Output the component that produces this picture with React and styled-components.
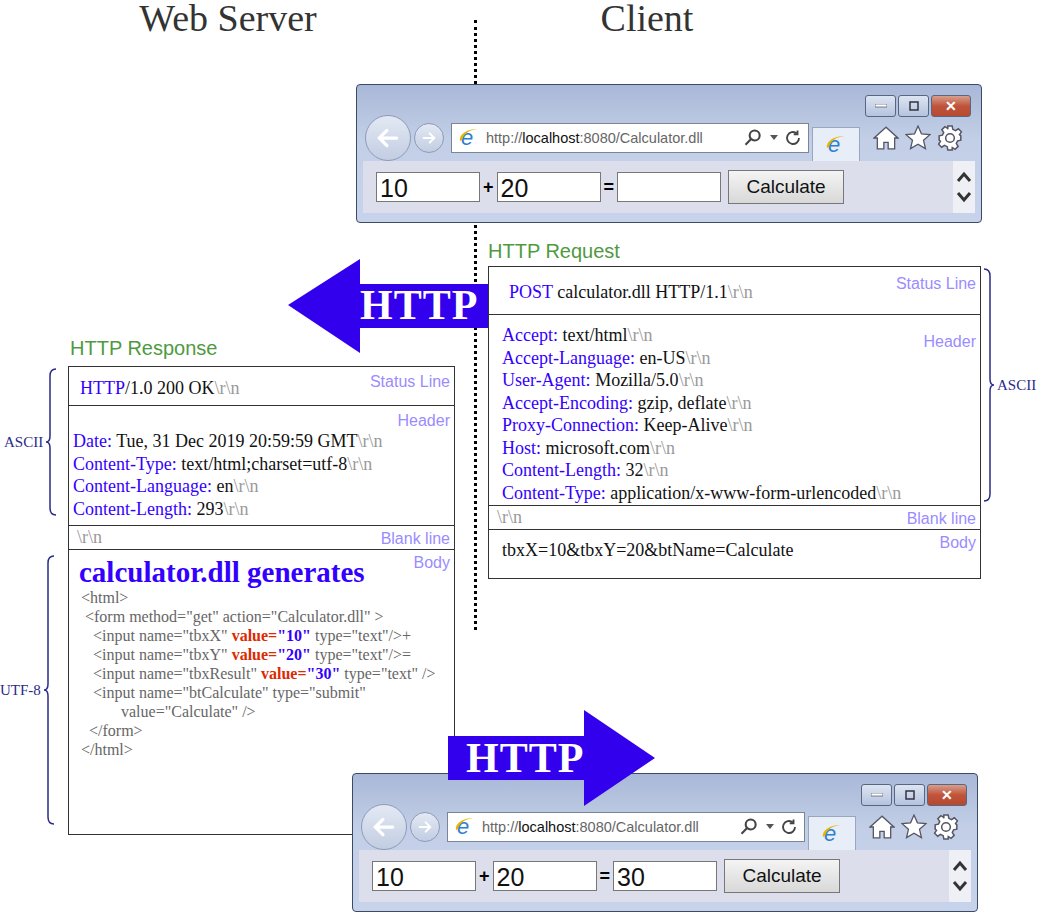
import React from 'react'
import styled, { createGlobalStyle } from 'styled-components'

const Global = createGlobalStyle`
  body { margin: 0; background: #fff; font-family: "Liberation Serif", serif; }
`

const Canvas = styled.div`
  position: relative;
  width: 1042px;
  height: 914px;
  overflow: hidden;
`

const Title = styled.div`
  position: absolute;
  top: -4px;
  left: ${p => p.x}px;
  width: 260px;
  text-align: center;
  font-family: "Liberation Serif", serif;
  font-size: 38px;
  line-height: 44px;
  color: #333;
`

const Dotted = styled.div`
  position: absolute;
  left: 474px;
  top: 20px;
  height: 610px;
  border-left: 3px dotted #000;
`

const Node = styled.div`
  position: absolute;
  left: ${p => p.x}px;
  top: ${p => p.y}px;
`

const Caption = styled.div`
  font-family: "Liberation Sans", sans-serif;
  font-size: 20px;
  color: #4f9a3f;
`

const Box = styled.div`
  width: ${p => p.w}px;
  border: 1px solid #333;
  background: #fff;
  display: flex;
  flex-direction: column;
`

const Section = styled.div`
  position: relative;
  height: ${p => p.h}px;
  padding: ${p => p.pad || '0 4px'};
  border-top: ${p => (p.first ? 'none' : '1px solid #333')};
  font-size: 18px;
  line-height: 22.5px;
  color: #111;
  box-sizing: border-box;
`

const Tag = styled.span`
  position: absolute;
  right: 4px;
  top: ${p => p.t || 2}px;
  font-family: "Liberation Sans", sans-serif;
  font-size: 16px;
  color: #9a8cff;
`

const K = styled.span` color: #3300ff; `
const G = styled.span` color: #999; `
const V = styled.b` color: ${p => (p.red ? '#dd2a00' : '#3300ff')}; `

const Big = styled.div`
  font-weight: bold;
  font-size: 29px;
  line-height: 32px;
  color: #3300ff;
  padding-left: 6px;
`

const Code = styled.div`
  font-size: 16px;
  line-height: 19px;
  color: #666;
  white-space: pre;
`

const Brace = styled.div`
  display: flex;
  align-items: center;
  gap: 2px;
  font-size: 15px;
  color: #2a2a8a;
`

const ArrowWrap = styled.div`
  position: relative;
  width: ${p => p.w}px;
  height: ${p => p.h}px;
`

const ArrowText = styled.div`
  position: absolute;
  left: ${p => p.tx}px;
  top: ${p => p.ty}px;
  font-size: 42px;
  font-weight: bold;
  color: #fff;
  letter-spacing: 1px;
`

const Win = styled.div`
  width: 626px;
  height: 139px;
  border: 1px solid #3c4a66;
  border-radius: 4px;
  background: linear-gradient(#a9b8d8, #c2cfe6 40%, #c7d3ea);
  box-sizing: border-box;
  display: flex;
  flex-direction: column;
`

const TitleBar = styled.div`
  display: flex;
  justify-content: flex-end;
  gap: 2px;
  padding: 10px 10px 0 0;
  height: 30px;
  box-sizing: border-box;
`

const WinBtn = styled.div`
  width: ${p => (p.close ? 38 : 29)}px;
  height: 20px;
  border: 1px solid #5a6580;
  border-radius: 3px;
  background: ${p => (p.close ? 'linear-gradient(#d79f8c,#c0543a 50%,#b64a30)' : 'linear-gradient(#dde5f2,#b5c3de)')};
  display: flex;
  align-items: center;
  justify-content: center;
  color: #fff;
  font-family: "Liberation Sans", sans-serif;
  font-weight: bold;
  font-size: 14px;
`

const NavRow = styled.div`
  display: flex;
  align-items: center;
  height: 46px;
  padding-left: 8px;
  gap: 3px;
`

const Circle = styled.div`
  width: ${p => p.s}px;
  height: ${p => p.s}px;
  border-radius: 50%;
  border: 1px solid #8e9bb8;
  background: linear-gradient(#e3e9f4, #c2cde2);
  display: flex;
  align-items: center;
  justify-content: center;
`

const Address = styled.div`
  width: 358px;
  height: 30px;
  margin-left: 4px;
  border: 1px solid #7a8599;
  background: #fff;
  display: flex;
  align-items: center;
  gap: 6px;
  padding: 0 6px;
  box-sizing: border-box;
  font-family: "Liberation Sans", sans-serif;
  font-size: 14.5px;
  color: #666;
`

const TabStub = styled.div`
  width: 46px;
  height: 34px;
  margin-top: 12px;
  border: 1px solid #9aa6bf;
  border-bottom: none;
  background: #e8eef8;
  display: flex;
  align-items: center;
  justify-content: center;
`

const Tools = styled.div`
  display: flex;
  gap: 6px;
  margin-left: 10px;
`

const Content = styled.div`
  margin: 0 6px;
  height: 52px;
  background: #dcdfeb;
  display: flex;
  align-items: center;
  padding-left: 13px;
  gap: 3px;
  font-family: "Liberation Sans", sans-serif;
  position: relative;
`

const Field = styled.div`
  width: 104px;
  height: 30px;
  border: 1px solid #777;
  background: #fff;
  font-size: 25px;
  line-height: 30px;
  padding-left: 3px;
  box-sizing: border-box;
  color: #111;
`

const Op = styled.span`
  font-size: 18px;
  font-weight: bold;
`

const Submit = styled.div`
  margin-left: 4px;
  width: 114px;
  height: 32px;
  border: 1px solid #777;
  background: linear-gradient(#f4f4f4, #d8d8d8);
  font-size: 19px;
  line-height: 32px;
  text-align: center;
  color: #111;
`

const Scroll = styled.div`
  position: absolute;
  right: 0;
  top: 0;
  bottom: 0;
  width: 22px;
  background: #eef0f6;
  display: flex;
  flex-direction: column;
  align-items: center;
  justify-content: center;
`

const IeLogo = () => (
  <svg width="22" height="22" viewBox="0 0 22 22">
    <text x="3" y="18" fontFamily="Liberation Sans" fontStyle="italic" fontSize="22" fill="#2f7fd4">e</text>
    <path d="M2 14 C0 6 14 0 21 3 C16 1 6 5 4 13" fill="#e8b400" />
  </svg>
)

const Browser = ({ result }) => (
  <Win>
    <TitleBar>
      <WinBtn><svg width="12" height="4"><rect width="12" height="3" fill="#fff" stroke="#334" strokeWidth="0.6" /></svg></WinBtn>
      <WinBtn><svg width="10" height="10"><rect x="1" y="1" width="8" height="8" fill="none" stroke="#334" strokeWidth="1.5" /></svg></WinBtn>
      <WinBtn close>✕</WinBtn>
    </TitleBar>
    <NavRow>
      <Circle s={44}>
        <svg width="26" height="26" viewBox="0 0 24 24" fill="none" stroke="#fff" strokeWidth="3" strokeLinecap="round"><path d="M20 12H5M11 5l-7 7 7 7" /></svg>
      </Circle>
      <Circle s={28}>
        <svg width="16" height="16" viewBox="0 0 24 24" fill="none" stroke="#fff" strokeWidth="3" strokeLinecap="round"><path d="M4 12h15M13 5l7 7-7 7" /></svg>
      </Circle>
      <Address>
        <IeLogo />
        <span style={{ flex: 1 }}>http://<span style={{ color: '#111' }}>localhost</span>:8080/Calculator.dll</span>
        <svg width="22" height="20" viewBox="0 0 24 24" fill="none" stroke="#444" strokeWidth="2.5"><circle cx="14" cy="9" r="6" /><path d="M10 13l-7 7" /></svg>
        <svg width="8" height="6"><path d="M0 0h8L4 5z" fill="#555" /></svg>
        <svg width="18" height="18" viewBox="0 0 24 24" fill="none" stroke="#444" strokeWidth="2.5"><path d="M20 12a8 8 0 1 1-3-6.2" /><path d="M18 2v5h-5" /></svg>
      </Address>
      <TabStub><IeLogo /></TabStub>
      <Tools>
        <svg width="26" height="26" viewBox="0 0 24 24" fill="#fff" stroke="#556" strokeWidth="1.2"><path d="M12 2L1 12h3v10h6v-6h4v6h6V12h3z" /></svg>
        <svg width="26" height="26" viewBox="0 0 24 24" fill="#fff" stroke="#556" strokeWidth="1.2"><path d="M12 1l3.2 7.2 7.8.7-5.9 5.2 1.8 7.7L12 17.8 5.1 21.8l1.8-7.7L1 8.9l7.8-.7z" /></svg>
        <svg width="26" height="26" viewBox="0 0 24 24" fill="#fff" stroke="#556" strokeWidth="1.4"><path d="M10 1h4l.6 3 2.5 1.2 2.6-1.7 2.8 2.8-1.7 2.6L22 10v4l-3 .6-1.2 2.5 1.7 2.6-2.8 2.8-2.6-1.7L14 22v1h-4l-.6-3-2.5-1.2-2.6 1.7-2.8-2.8 1.7-2.6L2 14v-4l3-.6 1.2-2.5-1.7-2.6 2.8-2.8 2.6 1.7L10 4z" /><circle cx="12" cy="12" r="4" /></svg>
      </Tools>
    </NavRow>
    <Content>
      <Field>10</Field>
      <Op>+</Op>
      <Field>20</Field>
      <Op>=</Op>
      <Field>{result}</Field>
      <Submit>Calculate</Submit>
      <Scroll>
        <svg width="18" height="38" viewBox="0 0 18 38" fill="none" stroke="#333" strokeWidth="3"><path d="M3 13l6-7 6 7M3 25l6 7 6-7" /></svg>
      </Scroll>
    </Content>
  </Win>
)

const CurlyBrace = ({ h, flip }) => (
  <svg width="12" height={h} viewBox={`0 0 12 ${h}`} fill="none" stroke="#2a2a8a" strokeWidth="1.5" style={flip ? { transform: 'scaleX(-1)' } : null}>
    <path d={`M11 1 Q5 1 5 8 L5 ${h / 2 - 6} Q5 ${h / 2} 1 ${h / 2} Q5 ${h / 2} 5 ${h / 2 + 6} L5 ${h - 8} Q5 ${h - 1} 11 ${h - 1}`} />
  </svg>
)

const reqHeaders = [
  ['Accept:', 'text/html'],
  ['Accept-Language:', 'en-US'],
  ['User-Agent:', 'Mozilla/5.0'],
  ['Accept-Encoding:', 'gzip, deflate'],
  ['Proxy-Connection:', 'Keep-Alive'],
  ['Host:', 'microsoft.com'],
  ['Content-Length:', '32'],
  ['Content-Type:', 'application/x-www-form-urlencoded'],
]

const resHeaders = [
  ['Date:', 'Tue, 31 Dec 2019 20:59:59 GMT'],
  ['Content-Type:', 'text/html;charset=utf-8'],
  ['Content-Language:', 'en'],
  ['Content-Length:', '293'],
]

const Line = ({ k, v }) => (
  <div><K>{k}</K> {v}<G>\r\n</G></div>
)

export default function App() {
  return (
    <Canvas>
      <Global />
      <Title x={98}>Web Server</Title>
      <Title x={517}>Client</Title>
      <Dotted />

      <Node x={356} y={84}><Browser result="" /></Node>

      <Node x={288} y={259}>
        <ArrowWrap w={210} h={94}>
          <svg width="210" height="94"><path d="M0 46 L72 0 V25 H209 V69 H72 V94 Z" fill="#3300ee" /></svg>
          <ArrowText tx={72} ty={22}>HTTP</ArrowText>
        </ArrowWrap>
      </Node>

      <Node x={488} y={240}>
        <Caption>HTTP Request</Caption>
        <Box w={491} style={{ marginTop: 3 }}>
          <Section first h={47} pad="14px 20px 0">
            <K>POST</K> calculator.dll HTTP/1.1<G>\r\n</G>
            <Tag t={6}>Status Line</Tag>
          </Section>
          <Section h={191} pad="9px 13px 0">
            {reqHeaders.map(([k, v]) => <Line key={k} k={k} v={v} />)}
            <Tag t={16}>Header</Tag>
          </Section>
          <Section h={24} pad="0 8px">
            <G>\r\n</G>
            <Tag t={2}>Blank line</Tag>
          </Section>
          <Section h={49} pad="9px 13px 0">
            tbxX=10&amp;tbxY=20&amp;btName=Calculate
            <Tag t={2}>Body</Tag>
          </Section>
        </Box>
      </Node>

      <Node x={983} y={268}>
        <Brace><CurlyBrace h={234} flip /><span>ASCII</span></Brace>
      </Node>

      <Node x={68} y={337}>
        <Caption style={{ marginLeft: 2 }}>HTTP Response</Caption>
        <Box w={385} style={{ marginTop: 6 }}>
          <Section first h={38} pad="10px 11px 0">
            <K>HTTP</K>/1.0 200 OK<G>\r\n</G>
            <Tag t={4}>Status Line</Tag>
          </Section>
          <Section h={120} pad="24px 4px 0">
            {resHeaders.map(([k, v]) => <Line key={k} k={k} v={v} />)}
            <Tag t={4}>Header</Tag>
          </Section>
          <Section h={24} pad="0 8px">
            <G>\r\n</G>
            <Tag t={2}>Blank line</Tag>
          </Section>
          <Section h={285} pad="6px 4px 0">
            <Big>calculator.dll generates</Big>
            <Code>{'  <html>\n   <form method="get" action="Calculator.dll" >\n     <input name="tbxX" '}<V red>value=</V><V>"10"</V>{' type="text"/>+\n     <input name="tbxY" '}<V red>value=</V><V>"20"</V>{' type="text"/>=\n     <input name="tbxResult" '}<V red>value=</V><V>"30"</V>{' type="text" />\n     <input name="btCalculate" type="submit"\n            value="Calculate" />\n    </form>\n  </html>'}</Code>
            <Tag t={2}>Body</Tag>
          </Section>
        </Box>
      </Node>

      <Node x={4} y={368}>
        <Brace><span>ASCII</span><CurlyBrace h={148} /></Brace>
      </Node>
      <Node x={0} y={555}>
        <Brace><span>UTF-8</span><CurlyBrace h={270} /></Brace>
      </Node>

      <Node x={352} y={773}><Browser result="30" /></Node>

      <Node x={448} y={710}>
        <ArrowWrap w={208} h={96}>
          <svg width="208" height="96"><path d="M0 26 H136 V0 L207 48 L136 96 V70 H0 Z" fill="#3300ee" /></svg>
          <ArrowText tx={18} ty={24}>HTTP</ArrowText>
        </ArrowWrap>
      </Node>
    </Canvas>
  )
}
